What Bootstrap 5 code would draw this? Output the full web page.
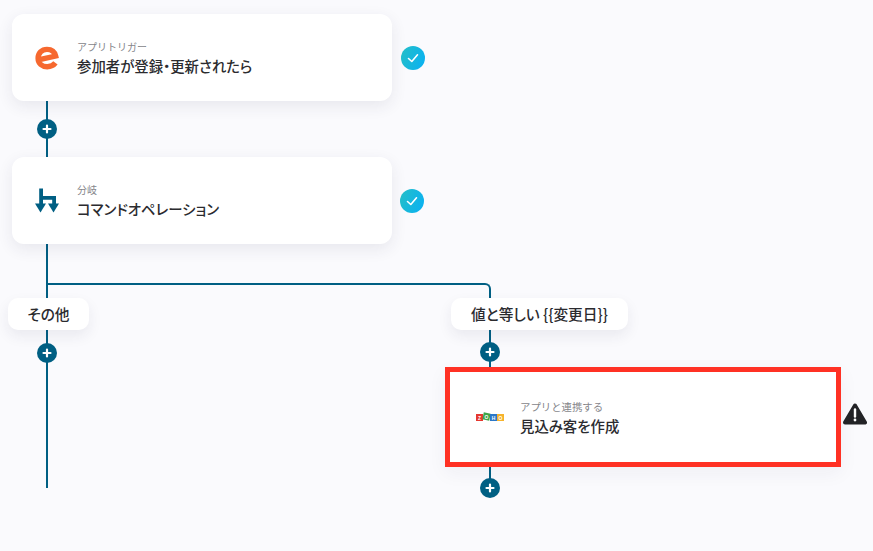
<!DOCTYPE html>
<html lang="ja">
<head>
<meta charset="utf-8">
<title>フロー</title>
<link href="https://cdn.jsdelivr.net/npm/bootstrap@5.3.0/dist/css/bootstrap.min.css" rel="stylesheet">
<style>
html,body{height:100%;margin:0}
body{background:#fafafd;font-family:"Noto Sans CJK JP","Inter",sans-serif;color:#2b2b2f;overflow:hidden}
.flow-canvas{position:relative;width:873px;height:551px}
.wire{position:absolute;background:#005f83}
.w-a{left:46px;top:101px;width:2px;height:56px}
.w-b{left:46px;top:244px;width:2px;height:244px}
.w-c{left:47px;top:283px;width:444px;height:17px;background:none;border-top:2px solid #005f83;border-right:2px solid #005f83;border-top-right-radius:6px}
.w-d{left:489px;top:300px;width:2px;height:188px}
.flow-node{position:absolute;background:#fff;box-shadow:0 5px 16px rgba(40,40,80,.09)}
.step-a,.step-b{left:12px;width:380px;height:87px;border-radius:12px}
.step-a{top:14px}
.step-b{top:157px}
.step-c{left:445px;top:367px;width:396px;height:100px;border:5px solid #ff3124;box-shadow:0 6px 18px rgba(40,40,80,.05)}
.node-icon{width:70px;flex:none;margin-right:-5px}
.step-c .node-icon{margin-right:0;padding-left:10px}
.node-copy{padding-top:1px}
.node-label{font-size:10px;line-height:14px;color:#85858a;font-weight:400}
.step-c .node-label{font-size:10.4px}
.node-title{font-size:14.4px;line-height:20px;font-weight:500;font-feature-settings:"palt";color:#2b2b2f;margin-top:2px}
.branch-tag{position:absolute;top:298px;height:32px;background:#fff;border-radius:10px;font-size:14.7px;font-weight:500;font-feature-settings:"palt";box-shadow:0 6px 14px rgba(40,40,80,.08)}
.tag-a{left:8px;width:81px}
.tag-b{left:451px;width:177px}
.plus{position:absolute;width:20px;height:20px;border-radius:50%;background:#005f83}
.p1{left:37px;top:119px}.p2{left:37px;top:343px}.p3{left:480px;top:342px}.p4{left:480px;top:478px}
.status{position:absolute;width:24px;height:24px;border-radius:50%;background:linear-gradient(110deg,#25bfc6,#08b0f5)}
.s1{left:401px;top:46px}.s2{left:400px;top:189px}
.warn{position:absolute;left:843px;top:403px}
</style>
</head>
<body>
<div class="flow-canvas">
  <div class="wire w-a"></div>
  <div class="wire w-b"></div>
  <div class="wire w-c"></div>
  <div class="wire w-d"></div>

  <div class="flow-node step-a d-flex align-items-center">
    <div class="node-icon d-flex justify-content-center">
      <svg width="26" height="26" viewBox="0 0 24 24" fill="none" stroke="#f6682f" stroke-width="5"><path d="M4 13.8 20 10.2C19 5.8 15.8 4 12 4 7 4 3.8 7.8 3.8 12.2 3.8 17 7.6 20 12.2 20 15.4 20 18 19 19.8 16.6"/></svg>
    </div>
    <div class="node-copy">
      <div class="node-label">アプリトリガー</div>
      <div class="node-title">参加者が登録・更新されたら</div>
    </div>
  </div>

  <div class="flow-node step-b d-flex align-items-center">
    <div class="node-icon d-flex justify-content-center">
      <svg width="26" height="26" viewBox="0 0 26 26" fill="#005f83"><path d="M5.2 0.5h3.8v7.6h13v9.4h-3.8v-5.8H9v5.8H5.2z"/><path d="M1 15.5h11l-5.5 9z"/><path d="M14 15.5h11l-5.5 9z"/></svg>
    </div>
    <div class="node-copy">
      <div class="node-label">分岐</div>
      <div class="node-title">コマンドオペレーション</div>
    </div>
  </div>

  <div class="branch-tag tag-a d-flex align-items-center justify-content-center">その他</div>
  <div class="branch-tag tag-b d-flex align-items-center justify-content-center">値と等しい {{変更日}}</div>

  <div class="flow-node step-c d-flex align-items-center">
    <div class="node-icon d-flex justify-content-center">
      <svg width="28" height="12" viewBox="0 0 28 12" font-size="5" font-weight="700" font-family="Liberation Sans,sans-serif" text-anchor="middle" fill="#fff">
        <rect x="0" y="3" width="7" height="7" fill="#e5382f"/><text x="3.5" y="8.5">Z</text>
        <rect x="7" y="2" width="7" height="7" fill="#3fa548" transform="rotate(12 10.5 5.5)"/><text x="10.5" y="7.5">O</text>
        <rect x="14" y="3" width="7" height="7" fill="#2c78c8"/><text x="17.5" y="8.5">H</text>
        <rect x="21" y="3" width="7" height="7" fill="#f6b32c"/><text x="24.5" y="8.5">O</text>
      </svg>
    </div>
    <div class="node-copy">
      <div class="node-label">アプリと連携する</div>
      <div class="node-title">見込み客を作成</div>
    </div>
  </div>

  <div class="plus p1 d-flex align-items-center justify-content-center"><svg width="10" height="10" viewBox="0 0 10 10" stroke="#fff" stroke-width="2.2" stroke-linecap="round"><path d="M5 1.5v7M1.5 5h7"/></svg></div>
  <div class="plus p2 d-flex align-items-center justify-content-center"><svg width="10" height="10" viewBox="0 0 10 10" stroke="#fff" stroke-width="2.2" stroke-linecap="round"><path d="M5 1.5v7M1.5 5h7"/></svg></div>
  <div class="plus p3 d-flex align-items-center justify-content-center"><svg width="10" height="10" viewBox="0 0 10 10" stroke="#fff" stroke-width="2.2" stroke-linecap="round"><path d="M5 1.5v7M1.5 5h7"/></svg></div>
  <div class="plus p4 d-flex align-items-center justify-content-center"><svg width="10" height="10" viewBox="0 0 10 10" stroke="#fff" stroke-width="2.2" stroke-linecap="round"><path d="M5 1.5v7M1.5 5h7"/></svg></div>

  <div class="status s1 d-flex align-items-center justify-content-center"><svg width="14" height="14" viewBox="0 0 14 14" fill="none" stroke="#fff" stroke-width="1.6" stroke-linecap="round" stroke-linejoin="round"><path d="M2.5 7.5 5.8 10.5 11.5 3.8"/></svg></div>
  <div class="status s2 d-flex align-items-center justify-content-center"><svg width="14" height="14" viewBox="0 0 14 14" fill="none" stroke="#fff" stroke-width="1.6" stroke-linecap="round" stroke-linejoin="round"><path d="M2.5 7.5 5.8 10.5 11.5 3.8"/></svg></div>

  <svg class="warn" width="24" height="22" viewBox="0 0 24 22"><path d="M12 2.5 22 19.5H2z" fill="#222326" stroke="#222326" stroke-width="4" stroke-linejoin="round"/><path d="M12 6.5v7" stroke="#fff" stroke-width="2.4" stroke-linecap="round"/><circle cx="12" cy="17" r="1.4" fill="#fff"/></svg>
</div>
<script src="https://cdn.jsdelivr.net/npm/bootstrap@5.3.0/dist/js/bootstrap.bundle.min.js"></script>
</body>
</html>
